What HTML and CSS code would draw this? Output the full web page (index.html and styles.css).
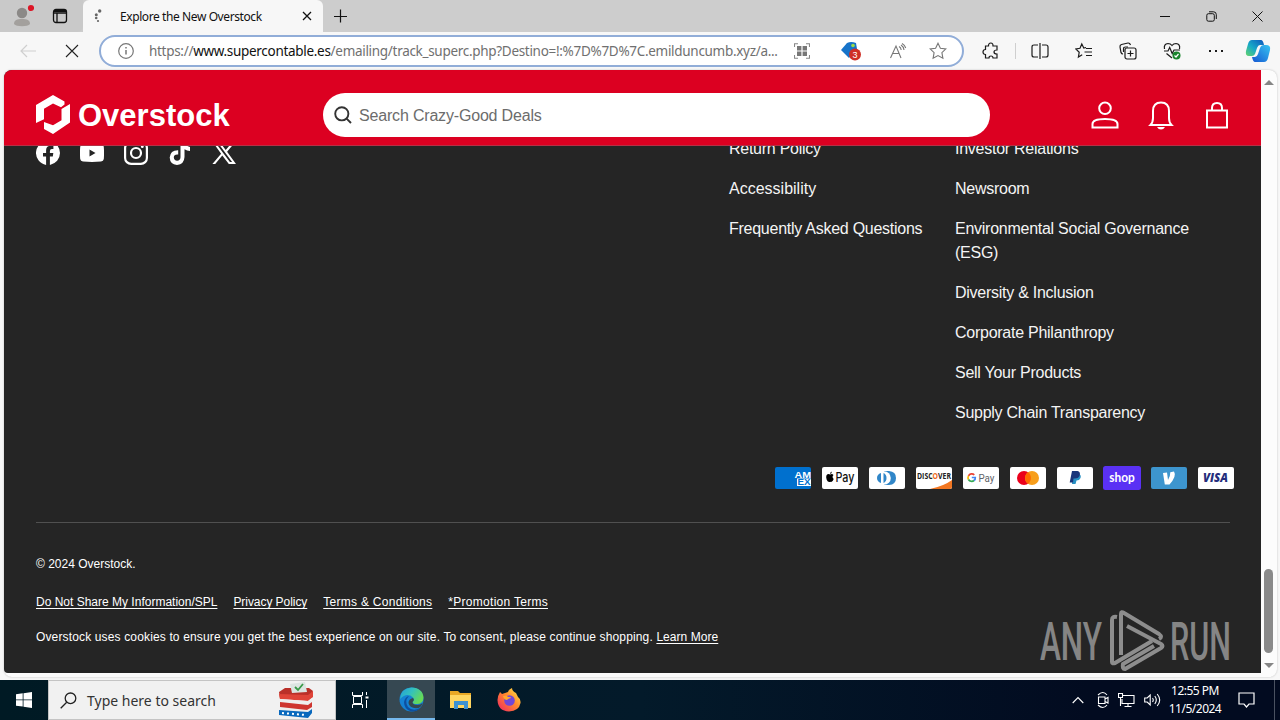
FILE: index.html
```html
<!DOCTYPE html>
<html lang="en">
<head>
<meta charset="utf-8">
<title>Explore the New Overstock</title>
<link rel="stylesheet" href="styles.css">
</head>
<body>
<div class="desktop">
  <div class="tabstrip">
    <div class="tabstrip-left">
      <svg width="24" height="32" viewBox="0 0 24 32"><circle cx="12" cy="13" r="5.2" fill="#8b8987"/><path d="M4 24c0-4 3-5 8-5s8 1 8 5c-2 3-14 3-16 0z" fill="#a3a09d"/><circle cx="21" cy="8" r="3.1" fill="#dc1626"/></svg>
      <svg class="workspaces" width="16" height="16" viewBox="0 0 16 16" fill="none" stroke="#111" stroke-width="1.3"><rect x="1.5" y="1.5" width="13" height="13" rx="2.5"/><path d="M2 3h12" stroke-width="2"/><path d="M2 5h12M5 5v9"/></svg>
    </div>
    <div class="tab">
      <svg width="16" height="16" viewBox="0 0 16 16" fill="#666"><circle cx="8.7" cy="3" r="1.7"/><circle cx="5.3" cy="6.7" r="1.5"/><circle cx="5.2" cy="10" r="1.3"/><circle cx="7" cy="13" r="1.1"/></svg>
      <span class="tab-title">Explore the New Overstock</span>
      <svg class="tab-close" width="10" height="10" viewBox="0 0 10 10" stroke="#111" stroke-width="1.3"><path d="M1 1l8 8M9 1L1 9"/></svg>
    </div>
    <svg class="tab-new" width="14" height="14" viewBox="0 0 14 14" stroke="#111" stroke-width="1.2"><path d="M6.5 .5v13M0 7.500h13"/></svg>
    <div class="window-buttons">
      <svg width="10" height="10" viewBox="0 0 10 10" stroke="#111"><path d="M0 5.5h10"/></svg>
      <svg width="11" height="11" viewBox="0 0 11 11" fill="none" stroke="#111"><rect x=".8" y="2.7" width="7.5" height="7.5" rx="1.6"/><path d="M3 .8h4.5q2.8 0 2.8 2.8V8"/></svg>
      <svg width="11" height="11" viewBox="0 0 11 11" stroke="#111"><path d="M.5.5l10 10M10.5.5l-10 10"/></svg>
    </div>
  </div>

  <div class="toolbar">
    <div class="nav">
      <svg width="16" height="14" viewBox="0 0 16 14" fill="none" stroke="#cfcfcf" stroke-width="1.2"><path d="M16 7H1M7 1L1 7l6 6"/></svg>
      <svg width="14" height="14" viewBox="0 0 14 14" stroke="#222" stroke-width="1.1"><path d="M1 1l12 12M13 1L1 13"/></svg>
    </div>
    <div class="address">
      <svg width="16" height="16" viewBox="0 0 16 16" fill="none" stroke="#777" stroke-width="1.2"><circle cx="8" cy="8" r="7.3"/><path d="M8 7v4.5M8 4v1.6" stroke-width="1.5"/></svg>
      <span class="url">https://<b>www.supercontable.es</b>/emailing/track_superc.php?Destino=!:%7D%7D%7C.emilduncumb.xyz/a...</span>
      <div class="address-actions">
        <svg width="16" height="16" viewBox="0 0 16 16" fill="#777"><path d="M.5 4V.8H4M12 .8h3.5V4M15.5 12v3.2H12M4 15.2H.5V12" fill="none" stroke="#888" stroke-width="1.1"/><path d="M3 3h4.4v4.4H3zM8.6 3H13v4.4H8.6zM3 8.6h4.4V13H3zM8.6 8.6H13V13H8.6z"/></svg>
        <svg class="coupon" width="22" height="20" viewBox="0 0 22 20"><path d="M1 9L7 2q4-2 9 0l1 6-8 9z" fill="#1673c9"/><circle cx="13" cy="4.5" r="1.8" fill="#9bdc4a"/><circle cx="15" cy="13.5" r="6" fill="#cf2f26"/><text x="15" y="17" text-anchor="middle" class="badge">3</text></svg>
        <svg class="read-aloud" width="18" height="16" viewBox="0 0 18 16" fill="none" stroke="#777" stroke-width="1.1"><path d="M1.5 15L7 3l5 12M3.5 10.5h7M10 3.5q2 1 2.2 3.5M12 2q2.8 1.7 3 5M13 .5q3 1.7 3.7 4.5"/></svg>
        <svg class="favorite" width="18" height="18" viewBox="0 0 18 18" fill="none" stroke="#777" stroke-width="1.1"><path d="M9 1.2l2.400 5 5.500.7-4 3.800 1 5.600L9 13.600l-4.900 2.700 1-5.600-4-3.800 5.500-.7z"/></svg>
      </div>
    </div>
    <div class="tools">
      <svg width="18" height="18" viewBox="0 0 18 18"><path d="M3.500 4h3q0-3 2.300-3t2.200 3h4v4q-3 0-3 2t3 2v4H11q0-2-2-2t-2 2H3.500v-3.500q-2.500 0-2.500-2.500t2.500-2.500z"/></svg>
      <i class="tool-divider"></i>
      <svg width="18" height="18" viewBox="0 0 18 18"><path d="M7 3H3q-2 0-2 2v8q0 2 2 2h4M11 3h4q2 0 2 2v8q0 2-2 2h-4M9 1v16"/></svg>
      <svg width="18" height="18" viewBox="0 0 18 18"><path d="M11 5.500L8.800 6 6.800 2 5 6.300.8 7l3.400 3.300L3.400 15l3.800-2.200M11 6.500h6M9.500 10H17M11 13.500h6"/></svg>
      <svg width="18" height="18" viewBox="0 0 18 18"><path d="M4 12q-1.500 0-2-1.500L1 5q-.3-2 1.500-2.500L9 1q1.800-.2 2.500 2M4.500 10V7q0-2 2-2H9"/><rect x="6" y="6" width="11" height="11" rx="2"/><path d="M11.500 8.500v6M8.500 11.500h6"/></svg>
      <svg width="18" height="18" viewBox="0 0 18 18"><path d="M1.500 7Q.5 2 5 1.500q2.500 0 4 2 1.500-2 4-2Q17.500 2 16.500 7M1 9h4l1.700-3.500 2.500 6L11 8h6M3.500 11.500L9 16"/><circle cx="13.500" cy="13.500" r="4" fill="#19842c" stroke="none"/><path d="M11.500 13.500l1.500 1.500 2.500-3" stroke="#fff"/></svg>
      <svg width="18" height="18" viewBox="0 0 18 18"><path d="M2 9h2M8 9h2M14 9h2" stroke-width="2"/></svg>
    </div>
    <svg class="copilot" width="26" height="24" viewBox="0 0 26 24"><defs><linearGradient id="ca" x1="0" y1="1" x2="1" y2="0"><stop offset="0" stop-color="#65d46a"/><stop offset=".45" stop-color="#17a9c7"/><stop offset="1" stop-color="#0e55bd"/></linearGradient><linearGradient id="cb" x1="0" y1="1" x2="1" y2="0"><stop offset="0" stop-color="#1557d2"/><stop offset="1" stop-color="#37c4f1"/></linearGradient></defs><path d="M7 1h9q2 0 3 5h-4q-2 0-3 3l-2 6q-1 2-3 2H4q-4 0-3-5l2-7q1-4 4-4z" fill="url(#ca)"/><path d="M19 23h-9q-2 0-3-5h3q2 0 3-3l2-6q1-3 4-3h2q5 0 4 5l-2 8q-1 4-4 4z" fill="url(#cb)"/></svg>
  </div>

  <div class="frame">
    <div class="page">
      <header class="site-header">
        <div class="logo">
          <svg width="34" height="39" viewBox="0 0 34 39" fill="#fff"><path d="M0 10L17 0l11.500 6.500v3L25 12.200 17 8.500l-9 5.300v10.500L0 28z"/><path d="M34 9v18.500L17 39 8 34v-7l9 3.200 8.500-5V14z"/></svg>
          <span>Overstock</span>
        </div>
        <div class="search">
          <svg width="18" height="18" viewBox="0 0 18 18" fill="none" stroke="#333" stroke-width="1.900"><circle cx="7.800" cy="7.800" r="6.600"/><path d="M12.600 12.600l4.400 4.400"/></svg>
          <span>Search Crazy-Good Deals</span>
        </div>
        <div class="account">
          <svg width="28" height="28" viewBox="0 0 28 28"><circle cx="14" cy="7.300" r="5.800"/><path d="M1.500 26.500V23q0-5 12.500-5t12.500 5v3.500z"/></svg>
          <svg width="28" height="30" viewBox="0 0 28 30"><path d="M3.500 25q2.500-2.500 2.500-7v-7q0-8.500 8-8.500t8 8.500v7q0 4.500 2.500 7z"/><path d="M10 27h8q-1.500 2.500-4 2.500T10 27z" fill="#fff" stroke="none"/></svg>
          <svg width="28" height="28" viewBox="0 0 28 28"><path d="M4 9.500h20v17H4zM9 9.500V7q0-5 5-5t5 5v2.500"/></svg>
        </div>
      </header>
      <div class="footer-clip">
        <footer class="footer">
          <div class="footer-top">
            <div class="social">
              <svg width="24" height="24" viewBox="0 0 24 24"><path d="M24 12A12 12 0 1 0 10.100 23.900V15.500H7V12h3.100V9.400q0-4.600 4.600-4.600l2.700.2v3h-1.500q-2 0-2 2V12h3.400l-.5 3.500h-2.900v8.400A12 12 0 0 0 24 12z"/></svg>
              <svg width="24" height="24" viewBox="0 0 24 24"><path fill-rule="evenodd" d="M3 3.500q9-1 18 0 2.500.3 2.800 2.500.5 6 0 12-.3 2.200-2.800 2.500-9 .8-18 0Q.5 20.200.2 18q-.5-6 0-12Q.5 3.800 3 3.500zM9.500 8.500v7l6-3.500z"/></svg>
              <svg width="24" height="24" viewBox="0 0 24 24"><g fill="none" stroke="#fff" stroke-width="2.200"><rect x="1.100" y="1.100" width="21.800" height="21.800" rx="6"/><circle cx="12" cy="12" r="5"/></g><circle cx="18.300" cy="5.700" r="1.400"/></svg>
              <svg width="24" height="24" viewBox="0 0 24 24"><path d="M12.500 0h4q.3 4.800 5.500 6v4q-3-.2-5.500-1.800V16q-.3 7.300-7.500 8-7-.5-7.300-7.500.6-7.500 8.500-7.300v4.300q-4.200-.5-4.400 2.800.2 3.300 3.300 3.500 3.200-.3 3.400-3.500z"/></svg>
              <svg width="24" height="24" viewBox="0 0 24 24"><path d="M.7 1h7l6 8L20.500 1h2.800l-8.200 9.700L24 23h-7.200l-6.500-8.600L3.200 23H.4l8.700-10.300zM4.400 2.900L17.900 21h2.200L6.700 2.900z" fill-rule="evenodd"/></svg>
            </div>
            <ul class="links help">
              <li>Return Policy</li><li class="wide">Accessibility</li><li>Frequently Asked Questions</li>
            </ul>
            <ul class="links company">
              <li>Investor Relations</li><li>Newsroom</li><li>Environmental Social Governance (ESG)</li><li>Diversity &amp; Inclusion</li><li>Corporate Philanthropy</li><li>Sell Your Products</li><li>Supply Chain Transparency</li>
            </ul>
          </div>
          <div class="payments">
            <svg width="36" height="22" viewBox="0 0 36 22"><rect width="36" height="22" rx="2" fill="#0070ce"/><path d="M22 11.500h14V19H22z" fill="#fff"/><g class="amex"><text x="19.500" y="10.700" textLength="16.500" lengthAdjust="spacingAndGlyphs">AM</text><text x="22.500" y="18.200" textLength="13" lengthAdjust="spacingAndGlyphs" class="amex-low">EX</text></g></svg>
            <svg width="36" height="22" viewBox="0 0 36 22"><rect width="36" height="22" rx="2" fill="#fff"/><path d="M8.200 7.500q2-1.200 3.300.5-2 2 .2 4-1.500 4-3.400 2.700-2.300 1-3.600-2-1.600-5 1.700-5.700zM8 7Q8 5 9.800 4.500 10 6.500 8 7z"/><text x="13.500" y="15" textLength="19" lengthAdjust="spacingAndGlyphs" class="apple">Pay</text></svg>
            <svg width="36" height="22" viewBox="0 0 36 22"><rect width="36" height="22" rx="2" fill="#fff"/><path d="M15 4h5q7 .5 7 7t-7 7h-5z" fill="#3086c8"/><circle cx="15" cy="11" r="6.800" fill="#fff"/><path d="M12 6v10q-4-1.300-4-5t4-5zM14.500 6v10q3-1.300 3-5t-3-5z" fill="#3086c8"/></svg>
            <svg width="36" height="22" viewBox="0 0 36 22"><rect width="36" height="22" rx="2" fill="#fff"/><path d="M36 13v7q0 2-2 2H14q14-3 22-9z" fill="#f27621"/><text x="1" y="12" textLength="34" lengthAdjust="spacingAndGlyphs" class="discover">DISC<tspan fill="#ed6820">O</tspan>VER</text></svg>
            <svg width="36" height="22" viewBox="0 0 36 22"><rect width="36" height="22" rx="2" fill="#fff"/><g fill="none" stroke-width="1.700"><path d="M11.300 7.800A3.700 3.700 0 0 0 5.500 8.800" stroke="#ea4335"/><path d="M5.500 8.800a4 4 0 0 0 0 3.700" stroke="#fbbc04"/><path d="M5.500 12.500a3.700 3.700 0 0 0 5.500 1" stroke="#34a853"/><path d="M11 13.500q1.500-1.300 1.300-3H8.800" stroke="#4285f4"/></g><text x="15.500" y="14.500" textLength="16" lengthAdjust="spacingAndGlyphs" class="gpay">Pay</text></svg>
            <svg width="36" height="22" viewBox="0 0 36 22"><rect width="36" height="22" rx="2" fill="#fff"/><circle cx="14" cy="11" r="7" fill="#eb001b"/><circle cx="22" cy="11" r="7" fill="#f79e1b"/><path d="M18 5.300a7 7 0 0 1 0 11.400 7 7 0 0 1 0-11.400z" fill="#ff6a00"/></svg>
            <svg width="36" height="22" viewBox="0 0 36 22"><rect width="36" height="22" rx="2" fill="#fff"/><path d="M16 7h6q2.500 1 1.500 4-1 2.500-4 2.500l-1 3.500h-3.500z" fill="#2790c3"/><path d="M15 4h5.500q3 .7 2.300 4-1 3.500-5 3.500h-1.300L16 15.500h-3.300z" fill="#19357b"/></svg>
            <svg class="shop" width="38" height="24" viewBox="0 0 38 24"><rect width="38" height="24" rx="2.500" fill="#5a31f4"/><text x="6.300" y="15.500" textLength="25.500" lengthAdjust="spacingAndGlyphs">shop</text></svg>
            <svg width="36" height="22" viewBox="0 0 36 22"><rect width="36" height="22" rx="2" fill="#3d95ce"/><path d="M23 4.500q3 4.500-4.500 13h-4.700L12 6l4-.4 1 7.400q2.500-4 2.300-7.700z" fill="#fff"/></svg>
            <svg width="36" height="22" viewBox="0 0 36 22"><rect width="36" height="22" rx="2" fill="#fff"/><text x="5" y="15" textLength="25" lengthAdjust="spacingAndGlyphs" class="visa">VISA</text></svg>
          </div>
          <div class="legal">
            <p class="copyright">© 2024 Overstock.</p>
            <p class="legal-links"><a>Do Not Share My Information/SPL</a><a class="snug">Privacy Policy</a><a class="loose">Terms &amp; Conditions</a><a class="loose">*Promotion Terms</a></p>
            <p class="cookies">Overstock uses cookies to ensure you get the best experience on our site. To consent, please continue shopping. <a>Learn More</a></p>
          </div>
        </footer>
      </div>
      <svg class="watermark" width="194" height="64" viewBox="0 0 194 64"><g class="wm-text"><text x="2" y="50.500" textLength="62" lengthAdjust="spacingAndGlyphs">ANY</text><text x="132" y="50.500" textLength="61" lengthAdjust="spacingAndGlyphs">RUN</text></g><g fill="none" stroke="#8d8d8d" stroke-width="4" stroke-linejoin="round"><path d="M79 8q-5-1-5 3v42q0 2 3 1l37-22"/><path d="M83 46V5q0-3 3-1l35 21q4 3 0 5"/><path d="M89 17l34 18q3 2 0 4L87 60q-3 0-2-5l31-18"/></g></svg>
    </div>
    <div class="scrollbar"><i class="arrow up"></i><i class="thumb"></i><i class="arrow down"></i></div>
  </div>

  <div class="taskbar">
    <div class="start"><svg width="16" height="16" viewBox="0 0 16 16" fill="#fff"><path d="M0 2.300l6.700-1v6.200H0zM7.500 1.200L16 0v7.500H7.500zM0 8.300h6.700v6.300L0 13.700zM7.500 8.300H16V16l-8.500-1.200z"/></svg></div>
    <div class="task-search">
      <svg width="17" height="17" viewBox="0 0 17 17" fill="none" stroke="#222" stroke-width="1.300"><circle cx="10.500" cy="6.300" r="5.300"/><path d="M6.700 10.200L.7 16.200"/></svg>
      <span>Type here to search</span>
      <svg class="ballot" width="36" height="37" viewBox="0 0 36 37"><path d="M1 10l6-4h24l4 3-4 8H2z" fill="#ba3029"/><path d="M12 2l15-2 2 10-15 1z" fill="#dce4e1"/><path d="M17 5l3 3 5-6" fill="none" stroke="#389947" stroke-width="1.800"/><path d="M1 12l29 1 5-4v6l-5 4-28-2z" fill="#df4438"/><path d="M2 17l28 2 4-3v14l-5 6-27-3z" fill="#eee"/><path d="M2 20l28 3 4-3v5l-5 3-27-3z" fill="#ce352f"/><path d="M1 28l29 2 4-3v4l-4 5-29-3z" fill="#0868bd"/><path d="M4 31l24 2" stroke="#fff" stroke-width="2" stroke-dasharray="2 3"/></svg>
    </div>
    <div class="task task-view"><svg width="17" height="16" viewBox="0 0 17 16" fill="none" stroke="#fff"><path d="M.5 0v3.500h10V0M.5 16v-3.500h10V16M1.500 4.500h8v7h-8zM14.500 0v3M14.500 8v8"/><path d="M13.500 4.500h3v2h-3z" fill="#fff" stroke="none"/></svg></div>
    <div class="task active"><svg width="25" height="25" viewBox="0 0 25 25"><defs><linearGradient id="eg" x1="0" y1="0" x2="1" y2=".5"><stop offset="0" stop-color="#249ddb"/><stop offset=".5" stop-color="#33c1bd"/><stop offset="1" stop-color="#67da55"/></linearGradient></defs><circle cx="12.500" cy="12.500" r="12" fill="#1582d3"/><path d="M1 12Q2 1 12.500.5 24 1 24.500 11q-.5 6-7 6-4 0-4-2 2-2 .5-4.500Q8 5 1 12z" fill="url(#eg)"/><path d="M10 9q-5 5-1 11 5 5 12 1-3 4-9 3.500Q5 22 5 15q1-5 5-6z" fill="#0d50a0"/><path d="M14 11q2 2-.5 4 0 3 5 3 3 0 5-2-1 4-4 5-9 1-10-5 0-4 4.500-5z" fill="#36474f"/></svg></div>
    <div class="task"><svg width="23" height="20" viewBox="0 0 23 20"><path d="M1 1h8l2 2h11v15H1z" fill="#e9a825"/><path d="M1 5h21v13H1z" fill="#ffd661"/><path d="M5 19v-8h14v8h-4v-4H9v4z" fill="#3d92d3"/></svg></div>
    <div class="task last"><svg width="24" height="24" viewBox="0 0 24 24"><defs><linearGradient id="fg" x1="1" y1="0" x2="0" y2="1"><stop offset="0" stop-color="#fff04a"/><stop offset=".45" stop-color="#ff8a2d"/><stop offset="1" stop-color="#f02065"/></linearGradient></defs><path d="M3 4l2 2 3-1 3-1q1-3 4-4 0 3 4 5l2 4q3 2 2.500 6Q22 23 12 23.500 1 23 .5 12 1 7 3 4z" fill="url(#fg)"/><circle cx="12.500" cy="12.500" r="5.300" fill="#7047d7"/><path d="M6 8q4-1 5 1 3-.5 3 1-3 .5-4 2-3 0-4-4z" fill="#ffa62c"/></svg></div>
    <div class="tray">
      <svg width="12" height="8" viewBox="0 0 12 8"><path d="M.7 7L6 1.500 11.300 7"/></svg>
      <svg width="12" height="18" viewBox="0 0 12 18"><path d="M1 4q5-5 9 0M1 14q5 5 9 0M1.500 6h6.500v6.500H1.500zM8 8l3-1.500v5.500L8 10.500"/></svg>
      <svg width="17" height="16" viewBox="0 0 17 16"><path d="M5 3.500h11v8H4V7M10 11.500V14M6.500 14.500h7M.5 1.500h4v4h-4zM2.500 5.500V14"/></svg>
      <svg width="17" height="14" viewBox="0 0 17 14"><path d="M.7 5h2.500l3-3v10l-3-3H.7zM8.500 5q1.500 2 0 4M10.800 3q3 4 0 8M13.200 1q5 6 0 12"/></svg>
    </div>
    <div class="clock"><span>12:55 PM</span><span>11/5/2024</span></div>
    <div class="notify"><svg width="17" height="16" viewBox="0 0 17 16" fill="none" stroke="#fff" stroke-width="1.200"><path d="M1 1h15v11h-5l-2.500 3L6 12H1z"/></svg></div>
  </div>
</div>
</body>
</html>
```
FILE: styles.css
```css
* { box-sizing: border-box; }
body { margin: 0; background: #f7f7f7; font-family: "Liberation Sans", Arial, sans-serif; }
svg { display: block; flex: none; }
p, ul { margin: 0; padding: 0; list-style: none; }
.desktop { width: 1280px; height: 720px; overflow: hidden; display: flex; flex-direction: column; background: #f7f7f7; }

.tabstrip { height: 32px; flex: none; display: flex; align-items: center; background: #cdcdcd; }
.tabstrip-left { width: 83px; display: flex; align-items: center; padding-left: 10px; background: #c9c9c9; height: 32px; border-radius: 0 0 6px 0; }
.workspaces { margin-left: 18px; }
.tab { width: 240px; height: 32px; display: flex; align-items: center; background: #f7f7f7; border-radius: 6px 6px 0 0; padding: 0 11px 0 8px; }
.tab-title { margin-left: 13px; font: 12px "Noto Sans", sans-serif; color: #111; white-space: nowrap; letter-spacing: -0.41px; }
.tab-close { margin-left: auto; }
.tab-new { margin-left: 11px; }
.window-buttons { margin-left: auto; display: grid; grid-template-columns: repeat(3, 46px); place-items: center; }

.toolbar { height: 38px; flex: none; display: flex; align-items: center; background: #f7f7f7; }
.nav { width: 99px; display: flex; align-items: center; gap: 29px; padding-left: 20px; }
.address { width: 865px; height: 32px; border: 2px solid #91add8; border-radius: 16px; background: #fff; display: flex; align-items: center; padding-left: 17px; }
.url { margin-left: 15px; width: 642px; font: 13.5px "Noto Sans", sans-serif; color: #707070; white-space: nowrap; letter-spacing: -0.3px; }
.url b { font-weight: 400; color: #111; }
.address-actions { display: flex; align-items: center; padding-left: 3px; }
.coupon { margin-left: 30px; }
.read-aloud { margin-left: 27px; }
.favorite { margin-left: 22px; }
.badge { font: 9px "Liberation Sans", sans-serif; fill: #fff; }
.tools { display: flex; align-items: center; gap: 26px; margin-left: 18px; }
.tools svg { fill: none; stroke: #1c1c1c; stroke-width: 1.2; }
.tool-divider { width: 1px; height: 16px; background: #cfcfcf; margin: 0 -11px; }
.copilot { margin-left: 20px; }

.frame { width: 1273px; height: 607px; margin-left: 4px; flex: none; display: flex; background: #fcfcfc; border-radius: 8px; box-shadow: 0 0 2px #bbb; }
.page { position: relative; width: 1257px; height: 603px; background: #252525; border-radius: 8px 0 0 4px; overflow: hidden; }
.site-header { height: 76px; background: #dc0021; display: flex; align-items: center; padding: 14px 0 0 32px; border-bottom: 1px solid #b53046; }
.logo { width: 287px; display: flex; align-items: center; gap: 8px; color: #fff; font-size: 31px; font-weight: 700; line-height: 39px; }
.logo span { padding-top: 1px; }
.search { width: 667px; height: 44px; border-radius: 22px; background: #fff; display: flex; align-items: center; gap: 7px; padding-left: 11px; font-size: 16px; color: #6c6c6c; letter-spacing: -0.18px; }
.search span { padding-top: 2px; }
.account { display: flex; align-items: center; gap: 28px; margin-left: 101px; }
.account svg { fill: none; stroke: #fff; stroke-width: 2; }
.footer-clip { height: 527px; overflow: hidden; }
.footer { margin-top: -9px; padding: 0 31px 0 32px; color: #fff; }
.footer-top { display: flex; height: 330px; }
.social { width: 693px; display: flex; gap: 20px; padding-top: 4px; fill: #fff; }
.links { display: flex; flex-direction: column; gap: 16px; font-size: 16px; line-height: 24px; color: #f4f4f4; letter-spacing: -0.26px; }
.links .wide { letter-spacing: 0; }
.help { width: 226px; }
.company { width: 248px; }
.payments { height: 22px; display: flex; align-items: center; justify-content: flex-end; gap: 11px; margin-right: -4px; }
.payments .shop { margin: 0 -1px; }
.amex { font: 700 9.500px "Liberation Sans", sans-serif; fill: #fff; }
.amex-low { fill: #0070ce; font-size: 8.500px; }
.apple { font: 500 13px Inter, sans-serif; fill: #111; }
.discover { font: 700 8px "Open Sans", sans-serif; fill: #222; }
.gpay { font: 11px Roboto, sans-serif; fill: #5f6368; }
.shop text { font: 700 12.500px Lato, sans-serif; fill: #fff; }
.visa { font: italic 800 12px "Open Sans", sans-serif; fill: #242d7c; }
.legal { margin-top: 33px; border-top: 1px solid #505050; font-size: 12px; line-height: 18px; white-space: nowrap; }
.copyright { padding-top: 32px; }
.legal-links { display: flex; gap: 16px; margin-top: 20px; }
.legal a { text-decoration: underline; text-underline-offset: 2px; }
.legal .snug { letter-spacing: -0.06px; }
.legal .loose { letter-spacing: 0.28px; }
.cookies { margin-top: 17px; letter-spacing: 0.145px; }
.cookies a { letter-spacing: 0.05px; }
.watermark { position: absolute; right: 29px; bottom: 0; }
.wm-text { font: 500 53px Roboto, sans-serif; fill: #858585; }
.scrollbar { width: 15px; display: flex; flex-direction: column; align-items: center; padding: 10px 0 9px; }
.arrow { border: 5px solid transparent; border-top-width: 0; border-bottom: 5px solid #858585; }
.arrow.down { border-top: 5px solid #858585; border-bottom-width: 0; margin-top: auto; }
.thumb { width: 9px; height: 84px; border-radius: 5px; background: #8a8a8a; margin-top: 484px; }

.taskbar { margin-top: 3px; height: 40px; flex: none; display: flex; align-items: center; background: linear-gradient(90deg, #001a24, #031a2a 50%, #020b20 85%); }
.start { width: 48px; display: grid; place-items: center; }
.task-search { width: 288px; height: 40px; display: flex; align-items: center; background: #f1f1f1; border: 1px solid #c4c4c4; padding: 0 21px 0 11px; font: 14px "Noto Sans", sans-serif; color: #333; }
.task-search span { margin-left: 10px; }
.ballot { margin-left: auto; }
.task { width: 50px; height: 40px; display: grid; place-items: center; }
.task-view { width: 51px; padding-right: 2px; }
.task.active { width: 48px; background: #364852; border-bottom: 2px solid #76b9ed; }
.task.last { width: 48px; }
.tray { margin-left: auto; margin-right: -2px; display: flex; align-items: center; gap: 9px; }
.tray svg { fill: none; stroke: #fff; stroke-width: 1.1; }
.tray svg:first-child { margin-right: 4px; }
.clock { width: 72px; display: flex; flex-direction: column; align-items: center; font: 12px/18px "Noto Sans", sans-serif; color: #fff; letter-spacing: -0.5px; }
.notify { width: 49px; height: 40px; display: flex; align-items: center; padding-left: 7px; padding-right: 19px; }
.notify::after { content: ""; width: 1px; height: 40px; margin-left: 19px; flex: none; background: #4a5261; }
```
